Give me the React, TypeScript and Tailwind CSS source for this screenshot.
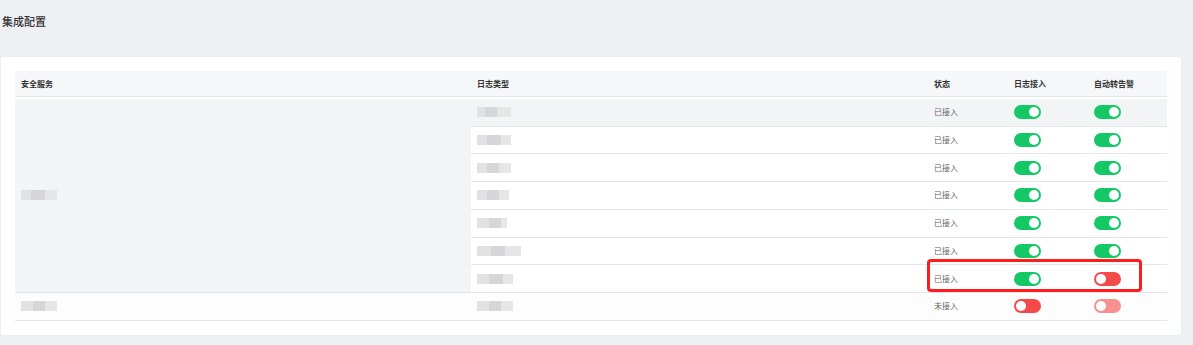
import React from 'react';

type Row = {
  status: string;
  logOn: boolean;
  alertOn: boolean;
  alertDisabled?: boolean;
  smudge: number[];
};

const font = { fontFamily: '"Noto Sans CJK SC", "Noto Sans", sans-serif' };

const groupRows: Row[] = [
  { status: '已接入', logOn: true, alertOn: true, smudge: [8, 12, 14] },
  { status: '已接入', logOn: true, alertOn: true, smudge: [10, 14, 10] },
  { status: '已接入', logOn: true, alertOn: true, smudge: [10, 12, 12] },
  { status: '已接入', logOn: true, alertOn: true, smudge: [10, 12, 10] },
  { status: '已接入', logOn: true, alertOn: true, smudge: [12, 12, 6] },
  { status: '已接入', logOn: true, alertOn: true, smudge: [14, 14, 16] },
  { status: '已接入', logOn: true, alertOn: false, smudge: [12, 14, 10] },
];

const lastRow: Row = { status: '未接入', logOn: false, alertOn: false, alertDisabled: true, smudge: [12, 12, 12] };

// blurred (mosaic) placeholder for hidden names
function Smudge({ parts }: { parts: number[] }) {
  const shades = ['bg-[#e2e2e2]', 'bg-[#d6d6d8]', 'bg-[#e6e6e6]'];
  return (
    <div className="flex h-[10px] items-stretch">
      {parts.map((w, i) => (
        <div key={i} className={shades[i % 3]} style={{ width: w }} />
      ))}
    </div>
  );
}

function Toggle({ on, disabled }: { on: boolean; disabled?: boolean }) {
  return (
    <div
      className={`flex h-[14px] w-[27px] items-center rounded-full px-[2px] ${
        on ? 'justify-end bg-[#14c866]' : 'justify-start bg-[#f44a4a]'
      } ${disabled ? 'opacity-60' : ''}`}
    >
      <div className="h-[10px] w-[10px] rounded-full bg-white" />
    </div>
  );
}

function Cells({ row, hovered, last }: { row: Row; hovered?: boolean; last?: boolean }) {
  const bg = hovered ? 'bg-[#f3f4f6]' : last ? 'bg-[#fdfdfd]' : 'bg-white';
  const cell = `flex items-center border-b border-[#e3e5eb] px-[6px] ${bg}`;
  return (
    <>
      <div className={cell}>
        <Smudge parts={row.smudge} />
      </div>
      <div className={`${cell} text-[8px] text-[#666]`}>{row.status}</div>
      <div className={cell}>
        <Toggle on={row.logOn} />
      </div>
      <div className={cell}>
        <Toggle on={row.alertOn} disabled={row.alertDisabled} />
      </div>
    </>
  );
}

export default function App() {
  return (
    <div className="min-h-[345px] w-[1193px] bg-[#eff0f4] px-[1px]" style={font}>
      <div className="h-[57px] pt-[13px] pl-[1px] text-[11px] leading-[16px] font-medium text-[#333]">集成配置</div>

      <div className="w-[1180px] rounded-[3px] bg-white p-[14px] shadow-[0_0_2px_rgba(0,0,0,0.04)]">
        <div className="relative">
          <div className="grid grid-cols-[456px_457px_80px_80px_79px] auto-rows-[27.75px] text-[8px]">
            {['安全服务', '日志类型', '状态', '日志接入', '自动转告警'].map((h) => (
              <div
                key={h}
                className="flex h-[26px] items-center border-b border-[#e3e5eb] bg-[#f6f7f9] px-[6px] font-semibold text-[#333]"
              >
                {h}
              </div>
            ))}

            <div className="row-span-7 flex items-center border-b border-[#e3e5eb] bg-[#f3f4f6] px-[6px]">
              <Smudge parts={[10, 14, 12]} />
            </div>
            {groupRows.map((r, i) => (
              <Cells key={i} row={r} hovered={i === 0} />
            ))}

            <div className="flex items-center border-b border-[#e3e5eb] bg-[#fdfdfd] px-[6px]">
              <Smudge parts={[12, 12, 12]} />
            </div>
            <Cells row={lastRow} last />
          </div>

          {/* highlight around the row with alert forwarding off */}
          <div className="pointer-events-none absolute left-[912px] top-[188px] h-[33px] w-[215px] rounded-[4px] border-[3px] border-[#ff1c1c]" />
        </div>
      </div>
    </div>
  );
}
